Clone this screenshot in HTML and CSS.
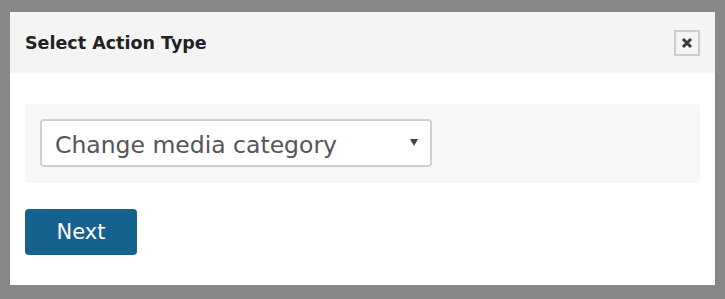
FILE: index.html
```html
<!DOCTYPE html>
<html>
<head>
<meta charset="utf-8">
<link rel="stylesheet" href="styles.css">
</head>
<body>
<div class="dialog">
  <div class="header">
    <h1 class="title">Select Action Type</h1>
    <button class="close" aria-label="Close">
      <svg width="12" height="12" viewBox="0 0 12 12"><path d="M2 2 L10 10 M10 2 L2 10" stroke="#3a3a3a" stroke-width="3" stroke-linecap="butt"/></svg>
    </button>
  </div>
  <div class="body">
    <div class="panel">
      <div class="select">
        <span class="select-text">Change media category</span>
        <span class="arrow"></span>
      </div>
    </div>
    <button class="next">Next</button>
  </div>
</div>
</body>
</html>
```
FILE: styles.css
```css
html, body { margin: 0; padding: 0; }
body {
  background: #878787;
  width: 725px;
  height: 299px;
  padding: 12px 10px 0 10px;
  box-sizing: border-box;
  font-family: "DejaVu Sans", Verdana, sans-serif;
}
.dialog {
  background: #fff;
  width: 705px;
  height: 273px;
}
.header {
  background: #f4f4f4;
  height: 61px;
  display: flex;
  align-items: center;
  justify-content: space-between;
  padding: 0 15px 0 15px;
  box-sizing: border-box;
}
.title {
  margin: 0;
  font-size: 17.5px;
  font-weight: 700;
  color: #222;
}
.close {
  width: 26px;
  height: 26px;
  border: 2px solid #ccc;
  background: #f4f4f4;
  padding: 0;
  display: flex;
  align-items: center;
  justify-content: center;
  box-sizing: border-box;
}
.close svg { display: block; }
.body {
  padding: 31px 15px 0 15px;
}
.panel {
  background: #f7f7f7;
  border-radius: 3px;
  height: 79px;
  padding: 15px 15px 0 15px;
  box-sizing: border-box;
}
.select {
  width: 392px;
  height: 48px;
  border: 2px solid #d0d0d0;
  border-radius: 4px;
  background: #fff;
  box-sizing: border-box;
  display: flex;
  align-items: center;
  justify-content: space-between;
  padding: 0 12px 0 13px;
}
.select-text {
  font-size: 23.5px;
  color: #555;
  padding-top: 3px;
}
.arrow {
  width: 0;
  height: 0;
  border-left: 4px solid transparent;
  border-right: 4px solid transparent;
  border-top: 7px solid #444;
  margin-top: -1px;
}
.next {
  margin-top: 26px;
  width: 112px;
  height: 46px;
  background: #16628f;
  color: #fff;
  border: none;
  border-radius: 4px;
  font-family: "DejaVu Sans", Verdana, sans-serif;
  font-size: 21px;
  font-weight: 400;
  display: block;
}
```
